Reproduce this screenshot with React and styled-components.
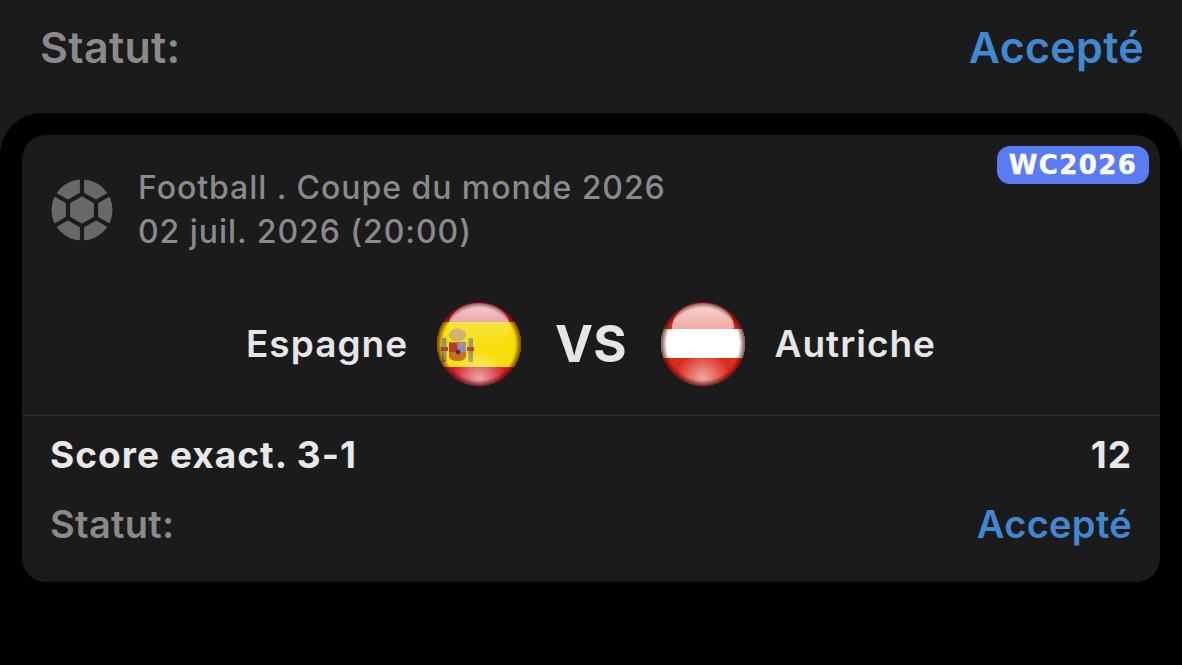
import React from "react";
import styled, { createGlobalStyle } from "styled-components";

const Global = createGlobalStyle`
  html, body { margin: 0; padding: 0; background: #000; }
  body { width: 1182px; height: 665px; overflow: hidden; font-family: Inter, "Liberation Sans", sans-serif; }
`;

const Page = styled.div`
  width: 1182px;
  height: 665px;
  background: #1b1b1c;
  display: flex;
  flex-direction: column;
  overflow: hidden;
`;

const TopRow = styled.div`
  height: 113px;
  box-sizing: border-box;
  padding: 22px 38px 0 40px;
  display: flex;
  justify-content: space-between;
  align-items: flex-start;
`;

const Label = styled.span`
  font-size: ${(p) => p.$size}px;
  line-height: 1.2;
  font-weight: 600;
  letter-spacing: 0.3px;
  color: #8a8a8c;
`;

const Status = styled.span`
  font-size: ${(p) => p.$size}px;
  line-height: 1.2;
  font-weight: 600;
  letter-spacing: 0.3px;
  color: #4089d2;
`;

const Sheet = styled.div`
  flex: 1;
  background: #000;
  border-radius: 42px 42px 0 0;
  padding: 22px 22px 0;
`;

const Card = styled.div`
  position: relative;
  height: 447px;
  background: #1b1b1c;
  border-radius: 24px;
  display: flex;
  flex-direction: column;
`;

const Badge = styled.div`
  position: absolute;
  top: 11px;
  right: 11px;
  width: 152px;
  height: 38px;
  border-radius: 13px;
  background: #5a7bf3;
  color: #fff;
  font-family: "DejaVu Sans", sans-serif;
  font-weight: 700;
  font-size: 26px;
  letter-spacing: 1.4px;
  -webkit-text-stroke: 0.4px #fff;
  display: flex;
  align-items: center;
  justify-content: center;
`;

const MatchInfo = styled.div`
  display: flex;
  align-items: center;
  gap: 25px;
  padding: 17px 0 0 29px;
  height: 133px;
  box-sizing: border-box;
`;

const InfoText = styled.div`
  font-size: 32px;
  font-weight: 500;
  line-height: 44px;
  letter-spacing: 0.95px;
  color: #8a8a8c;
`;

const Teams = styled.div`
  height: 148px;
  display: flex;
  align-items: center;
  justify-content: center;
  padding-top: 3px;
  box-sizing: border-box;
`;

const TeamName = styled.span`
  font-size: 37px;
  font-weight: 600;
  letter-spacing: 1px;
  color: #e6e6e8;
`;

const Versus = styled.span`
  font-size: 51px;
  font-weight: 700;
  color: #e6e6e8;
  margin: 0 30px;
`;

const Divider = styled.div`
  height: 1px;
  background: #2e2e30;
  margin-top: -1px;
`;

const Row = styled.div`
  display: flex;
  justify-content: space-between;
  align-items: center;
  padding: 0 28px 0 28px;
  height: ${(p) => p.$height}px;
`;

const Pick = styled.span`
  font-size: 37px;
  font-weight: 700;
  letter-spacing: 1.05px;
  color: #e8e8ea;
`;

const FlagSvg = styled.svg`
  width: 92px;
  height: 92px;
  display: block;
  flex: none;
  margin: ${(p) => p.$margin};
`;

const BallIcon = () => (
  <svg width="62" height="62" viewBox="0 0 62 62">
    <circle cx="31" cy="31" r="30.5" fill="#68686a" />
    <g stroke="#1b1b1d" strokeWidth="4.2" fill="none">
      <polygon points="31,15 45,23 45,39 31,47 17,39 17,23" />
      <path d="M31 15V0M31 47V62M45 23L58 15.5M17 23L4 15.5M45 39L58 46.5M17 39L4 46.5" />
    </g>
  </svg>
);

// glossy bubble on top of a flag: edge is where the top band stops, as a gradient offset
const GlossDefs = ({ id, edge }) => (
  <>
    <linearGradient id={`${id}-top`} x1="0" y1="0" x2="0" y2="1">
      <stop offset="0" stopColor="#fff" stopOpacity="0.8" />
      <stop offset={edge} stopColor="#fff" stopOpacity="0.6" />
      <stop offset={edge + 0.02} stopColor="#fff" stopOpacity="0.2" />
      <stop offset="1" stopColor="#fff" stopOpacity="0" />
    </linearGradient>
    <radialGradient id={`${id}-bot`} cx="46" cy="80" r="27" gradientUnits="userSpaceOnUse">
      <stop offset="0" stopColor="#fff" stopOpacity="0.6" />
      <stop offset="1" stopColor="#fff" stopOpacity="0" />
    </radialGradient>
    <radialGradient id={`${id}-edge`} cx="0.5" cy="0.5" r="0.5">
      <stop offset="0.86" stopColor="#300" stopOpacity="0" />
      <stop offset="1" stopColor="#400" stopOpacity="0.7" />
    </radialGradient>
  </>
);

const Gloss = ({ id }) => (
  <>
    <ellipse cx="46" cy="29" rx="31" ry="24" fill={`url(#${id}-top)`} />
    <circle cx="46" cy="46" r="42" fill={`url(#${id}-bot)`} />
    <circle cx="46" cy="46" r="42" fill={`url(#${id}-edge)`} />
  </>
);

const SpainFlag = ({ margin }) => (
  <FlagSvg viewBox="0 0 92 92" $margin={margin}>
    <defs>
      <clipPath id="es-clip"><circle cx="46" cy="46" r="42" /></clipPath>
      <GlossDefs id="es" edge={0.396} />
    </defs>
    <g clipPath="url(#es-clip)">
      <rect width="92" height="92" fill="#d0202a" />
      <rect y="24" width="92" height="45" fill="#f8de0a" />
      {/* coat of arms */}
      <rect x="9" y="40" width="4.5" height="24" rx="1" fill="#9a9460" />
      <rect x="35.5" y="40" width="4.5" height="24" rx="1" fill="#9a9460" />
      <rect x="8" y="49" width="7" height="4" fill="#b04a2a" />
      <rect x="34" y="49" width="7" height="4" fill="#b04a2a" />
      <ellipse cx="24.5" cy="37" rx="8.5" ry="6.5" fill="#c8a868" />
      <path d="M16 44h17v13q0 6-8.5 6T16 57z" fill="#c4702a" />
      <rect x="25" y="45" width="8" height="9" fill="#8a8cc0" />
      <rect x="16" y="45" width="8" height="9" fill="#b83a22" />
      <circle cx="25" cy="54" r="2.4" fill="#5a2a50" />
    </g>
    <Gloss id="es" />
  </FlagSvg>
);

const AustriaFlag = ({ margin }) => (
  <FlagSvg viewBox="0 0 92 92" $margin={margin}>
    <defs>
      <clipPath id="at-clip"><circle cx="46" cy="46" r="42" /></clipPath>
      <GlossDefs id="at" edge={0.54} />
    </defs>
    <g clipPath="url(#at-clip)">
      <rect width="92" height="92" fill="#dc2a1c" />
      <rect y="31" width="92" height="29" fill="#fff" />
    </g>
    <Gloss id="at" />
  </FlagSvg>
);

const App = () => (
  <Page>
    <Global />
    <TopRow>
      <Label $size={43}>Statut:</Label>
      <Status $size={43}>Accepté</Status>
    </TopRow>
    <Sheet>
      <Card>
        <Badge>WC2026</Badge>
        <MatchInfo>
          <BallIcon />
          <InfoText>
            Football . Coupe du monde 2026
            <br />
            02 juil. 2026 (20:00)
          </InfoText>
        </MatchInfo>
        <Teams>
          <TeamName>Espagne</TeamName>
          <SpainFlag margin="0 0 0 25px" />
          <Versus>VS</Versus>
          <AustriaFlag margin="0 26px 0 0" />
          <TeamName>Autriche</TeamName>
        </Teams>
        <Divider />
        <Row $height={76}>
          <Pick>Score exact. 3-1</Pick>
          <Pick>12</Pick>
        </Row>
        <Row $height={66}>
          <Label $size={38}>Statut:</Label>
          <Status $size={38}>Accepté</Status>
        </Row>
      </Card>
    </Sheet>
  </Page>
);

export default App;
